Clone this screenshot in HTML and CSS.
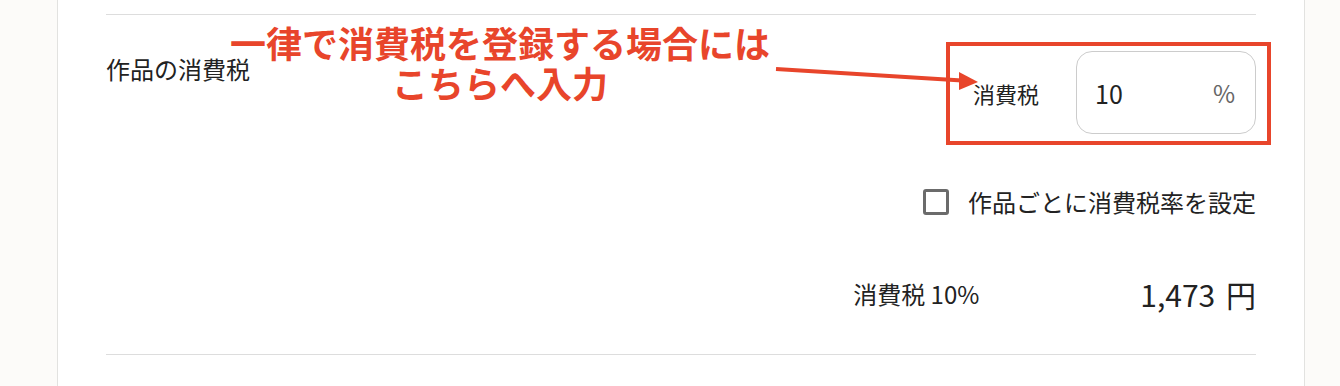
FILE: index.html
```html
<!DOCTYPE html>
<html lang="ja">
<head>
    <meta charset="UTF-8">
    <title>作品の消費税</title>
    <link rel="stylesheet" href="styles.css">
</head>
<body>
    <div class="page">
        <div class="card">
            <div class="divider"></div>
            <div class="tax-section">
                <div class="tax-label">作品の消費税</div>
                <div class="tax-controls">
                    <div class="rate-row">
                        <span class="rate-label">消費税</span>
                        <div class="rate-input">
                            <span class="rate-value">10</span>
                            <span class="rate-unit">%</span>
                        </div>
                    </div>
                    <label class="check-row">
                        <span class="checkbox"></span>
                        <span>作品ごとに消費税率を設定</span>
                    </label>
                    <div class="total-row">
                        <span class="total-label">消費税 10%</span>
                        <span class="total-amount">1,473 円</span>
                    </div>
                </div>

                <!-- 注釈 -->
                <div class="note">一律で消費税を登録する場合には<br>こちらへ入力</div>
                <svg class="note-arrow" width="215" height="40" viewBox="0 0 215 40">
                    <line x1="6" y1="9" x2="192" y2="20.5" stroke="#e8452b" stroke-width="4"/>
                    <polygon points="189,12 189,30 208,22" fill="#e8452b"/>
                </svg>
                <div class="note-box"></div>
            </div>
            <div class="divider"></div>
        </div>
    </div>
</body>
</html>
```

FILE: styles.css
```css
body {
    margin: 0;
    background-color: #fcfbf9;
    font-family: "Noto Sans CJK JP", "Noto Sans", sans-serif;
    color: #222;
}
.page {
    display: flex;
    padding-left: 57px;
    height: 386px;
    overflow: hidden;
}
.card {
    box-sizing: border-box;
    width: 1248px;
    background-color: #fff;
    border-left: 1px solid #e2e2e0;
    border-right: 1px solid #e2e2e0;
    padding: 14px 48px 0;
}
.divider {
    height: 1px;
    background-color: #ddd;
}
.tax-section {
    position: relative;
    display: flex;
    justify-content: space-between;
    padding-bottom: 40px;
}
.tax-label {
    font-size: 24px;
    line-height: 32px;
    padding-top: 38px;
}
.tax-controls {
    display: flex;
    flex-direction: column;
    align-items: flex-end;
}
.rate-row {
    display: flex;
    align-items: center;
    gap: 37px;
    margin-top: 36px;
}
.rate-label {
    font-size: 22px;
}
.rate-input {
    box-sizing: border-box;
    width: 180px;
    height: 83px;
    border: 1px solid #ccc;
    border-radius: 16px;
    display: flex;
    align-items: center;
    justify-content: space-between;
    padding: 0 20px 0 18px;
}
.rate-value {
    font-size: 25px;
}
.rate-unit {
    font-size: 24px;
    color: #666;
}
.check-row {
    display: flex;
    align-items: center;
    gap: 19px;
    margin-top: 52px;
    font-size: 24px;
    line-height: 32px;
}
.checkbox {
    box-sizing: border-box;
    width: 26px;
    height: 26px;
    border: 3px solid #6b6b6b;
    border-radius: 3px;
}
.total-row {
    display: flex;
    align-items: center;
    gap: 161px;
    margin-top: 56px;
    line-height: 40px;
}
.total-label {
    font-size: 24px;
}
.total-amount {
    font-size: 30px;
    word-spacing: 4px;
}
.note {
    position: absolute;
    left: 124px;
    top: 7px;
    width: 540px;
    text-align: center;
    color: #e8452b;
    font-size: 36px;
    font-weight: bold;
    line-height: 40px;
}
.note-arrow {
    position: absolute;
    left: 664px;
    top: 45px;
}
.note-box {
    position: absolute;
    left: 840px;
    top: 27px;
    width: 325px;
    height: 103px;
    box-sizing: border-box;
    border: 4px solid #e8452b;
}
```
